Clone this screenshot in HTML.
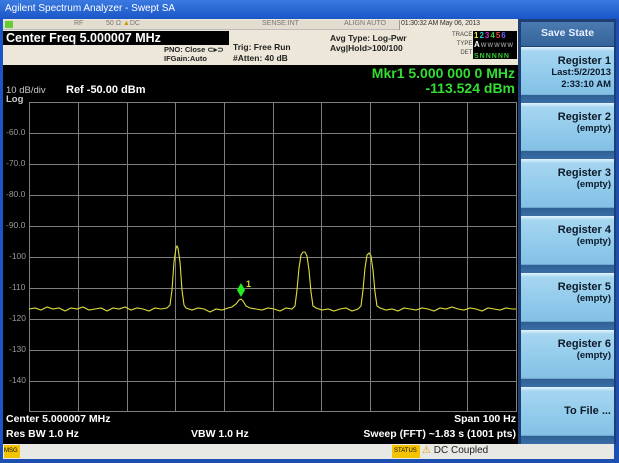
<!DOCTYPE html>
<html><head><meta charset="utf-8"><style>
*{margin:0;padding:0;box-sizing:border-box}
body{width:619px;height:463px;overflow:hidden;background:#1c4fb0;font-family:"Liberation Sans",sans-serif;position:relative}
.a{position:absolute;white-space:nowrap}
.b{font-weight:bold}
.btn{position:absolute;left:521px;width:93px;background:linear-gradient(#e6f4fc 0,#a6d6f0 4px,#8cc8ea 60%,#84c0e4 85%,#2e5f95 86%,#3a6ea4 100%);text-align:right;padding-right:3px;color:#0c1a2a}
.btn .t{font-weight:bold;font-size:11px;margin-top:8px}
.btn .s{font-size:9.5px;font-weight:bold}
</style></head><body>
<div class="a" style="left:0;top:0;width:619px;height:19px;background:linear-gradient(#3a7ae0,#1a56c8);"></div>
<div class="a" style="left:5px;top:3px;color:#fff;font-size:10px">Agilent Spectrum Analyzer - Swept SA</div>
<div class="a" style="left:3px;top:19px;width:515px;height:46px;background:#ece7d8"></div>
<div class="a" style="left:3px;top:20px;width:515px;height:10px;background:#e2ddcf;border-bottom:1px solid #bbb"></div>
<div class="a" style="left:5px;top:21px;width:8px;height:7px;background:#6c3"></div>
<div class="a" style="left:74px;top:20px;font-size:7px;color:#777">RF</div>
<div class="a" style="left:106px;top:20px;font-size:7px;color:#777">50 Ω <span style="color:#c90">▲</span>DC</div>
<div class="a" style="left:262px;top:20px;font-size:7px;color:#777">SENSE:INT</div>
<div class="a" style="left:344px;top:20px;font-size:7px;color:#777">ALIGN AUTO</div>
<div class="a" style="left:399px;top:20px;width:119px;height:10px;background:#ece7d8;border-left:1px solid #999"></div>
<div class="a" style="left:401px;top:20px;font-size:7px;color:#333;letter-spacing:-0.2px">01:30:32 AM May 06, 2013</div>
<div class="a" style="left:3px;top:31px;width:226px;height:14px;background:#000"></div>
<div class="a b" style="left:6px;top:31px;font-size:12.5px;color:#fff">Center Freq 5.000007 MHz</div>
<div class="a b" style="left:164px;top:45px;font-size:7.5px;color:#222">PNO: Close ⊂▸⊃<br>IFGain:Auto</div>
<div class="a b" style="left:233px;top:42px;font-size:8.5px;color:#222;line-height:11px">Trig: Free Run<br>#Atten: 40 dB</div>
<div class="a b" style="left:330px;top:33px;font-size:8.5px;color:#222;line-height:10px">Avg Type: Log-Pwr<br>Avg|Hold&gt;100/100</div>
<div class="a" style="left:448px;top:31px;width:70px;height:29px;background:#ece7d8"></div>
<div class="a" style="left:452px;top:31px;font-size:6px;color:#444;line-height:9px;text-align:right">TRACE<br>TYPE<br>DET</div>
<div class="a" style="left:473px;top:31px;width:44px;height:28px;background:#000"></div>
<div class="a b" style="left:474px;top:31px;font-size:8px;line-height:9px;letter-spacing:1px"><span style="color:#ee4">1</span><span style="color:#2cc">2</span><span style="color:#c3c">3</span><span style="color:#3c3">4</span><span style="color:#e44">5</span><span style="color:#66f">6</span><br><span style="color:#fff">A</span><span style="color:#888;font-size:6px">WWWWW</span><br><span style="color:#3c3;font-size:7px">SNNNNN</span></div>
<div class="a" style="left:3px;top:65px;width:515px;height:379px;background:#000"></div>
<div class="a" style="left:0;top:19px;width:3px;height:425px;background:#1a56c8"></div>
<div class="a b" style="right:104px;top:66px;font-size:14px;color:#3d3;text-align:right;line-height:15px">Mkr1 5.000 000 0 MHz<br>-113.524 dBm</div>
<div class="a" style="left:6px;top:86px;font-size:9.5px;color:#ccc;line-height:9px">10 dB/div<br><span class="b">Log</span></div>
<div class="a b" style="left:66px;top:84px;font-size:11px;color:#fff">Ref -50.00 dBm</div>
<svg class="a" style="left:0;top:0" width="619" height="463">
<g stroke="#7e7e7e" stroke-width="1" fill="none">
<rect x="29.5" y="102.5" width="487" height="309"/>
<path d="M78.5 102V412M127.5 102V412M175.5 102V412M224.5 102V412M273.5 102V412M321.5 102V412M370.5 102V412M419.5 102V412M467.5 102V412M29 133.5H517M29 164.5H517M29 195.5H517M29 226.5H517M29 257.5H517M29 288.5H517M29 319.5H517M29 350.5H517M29 381.5H517"/>
</g>
<g fill="#999" font-size="8.5" font-family="Liberation Sans,sans-serif">
<text x="6" y="135">-60.0</text><text x="6" y="166">-70.0</text><text x="6" y="197">-80.0</text><text x="6" y="228">-90.0</text><text x="9" y="259">-100</text><text x="9" y="290">-110</text><text x="9" y="321">-120</text><text x="9" y="352">-130</text><text x="9" y="383">-140</text>
</g>
<polyline fill="none" stroke="#dede3a" stroke-width="1.1" points="29,309 35,308 41,310 47,307 53,309 59,308 65,311 71,308 77,309 83,307 89,310 95,309 101,308 107,311 113,308 119,309 125,307 131,310 137,308 143,309 149,311 155,308 161,309 167,308 170,305 172,290 174,262 176,248 177,246 178,248 180,262 182,290 184,305 186,308 192,310 198,308 204,309 210,312 216,309 222,310 228,308 232,307 236,304 239,300 241,299 243,301 246,306 250,308 256,309 262,310 268,308 274,309 280,311 286,308 292,309 295,306 297,290 299,268 301,255 303,252 305,252 307,256 309,270 311,292 313,306 316,308 322,310 328,309 334,311 340,309 346,308 352,311 358,309 361,306 363,290 365,268 367,255 369,253 371,256 373,270 375,292 377,306 380,308 386,310 392,309 398,311 404,308 410,309 416,310 422,308 428,309 434,311 440,308 446,309 452,307 458,309 464,310 470,308 476,309 482,311 488,308 494,309 500,310 506,308 512,309 516,309"/>
<polygon points="241,283 245,290 241,297 237,290" fill="#2e2"/>
<text x="246" y="287" fill="#dede3a" font-size="9" font-weight="bold" font-family="Liberation Sans,sans-serif">1</text>
</svg>
<div class="a b" style="left:6px;top:413px;font-size:10.5px;color:#fff">Center 5.000007 MHz</div>
<div class="a b" style="left:6px;top:428px;font-size:10.5px;color:#fff">Res BW 1.0 Hz</div>
<div class="a b" style="left:191px;top:428px;font-size:10.5px;color:#fff">VBW 1.0 Hz</div>
<div class="a b" style="right:103px;top:413px;font-size:10.5px;color:#fff">Span 100 Hz</div>
<div class="a b" style="right:103px;top:428px;font-size:10.5px;color:#fff">Sweep (FFT) ~1.83 s (1001 pts)</div>
<div class="a" style="left:3px;top:444px;width:611px;height:15px;background:#e8e8e4"></div>
<div class="a" style="left:4px;top:445px;width:16px;height:13px;background:#f5c400;font-size:6px;padding-top:3px">MSG</div>
<div class="a" style="left:392px;top:445px;width:28px;height:13px;background:#f5c400;font-size:6px;padding:3px 0 0 2px">STATUS</div>
<div class="a" style="left:422px;top:445px;font-size:10px;color:#222"><span style="color:#d90">⚠</span> DC Coupled</div>
<div class="a" style="left:518px;top:19px;width:98px;height:425px;background:#1e3f73"></div>
<div class="a b" style="left:521px;top:22px;width:93px;height:24px;background:linear-gradient(#4a7ab0,#34649a);color:#e8f0ff;font-size:10.5px;text-align:center;padding-top:5px">Save State</div>
<div class="btn" style="top:47px;height:56px"><div class="t">Register 1</div><div class="s" style="line-height:12px">Last:5/2/2013<br>2:33:10 AM</div></div>
<div class="btn" style="top:103px;height:56px"><div class="t">Register 2</div><div class="s">(empty)</div></div>
<div class="btn" style="top:159px;height:57px"><div class="t">Register 3</div><div class="s">(empty)</div></div>
<div class="btn" style="top:216px;height:57px"><div class="t">Register 4</div><div class="s">(empty)</div></div>
<div class="btn" style="top:273px;height:57px"><div class="t">Register 5</div><div class="s">(empty)</div></div>
<div class="btn" style="top:330px;height:57px"><div class="t">Register 6</div><div class="s">(empty)</div></div>
<div class="btn" style="top:387px;height:57px"><div class="t" style="margin-top:18px">To File ...</div></div>
</body></html>
